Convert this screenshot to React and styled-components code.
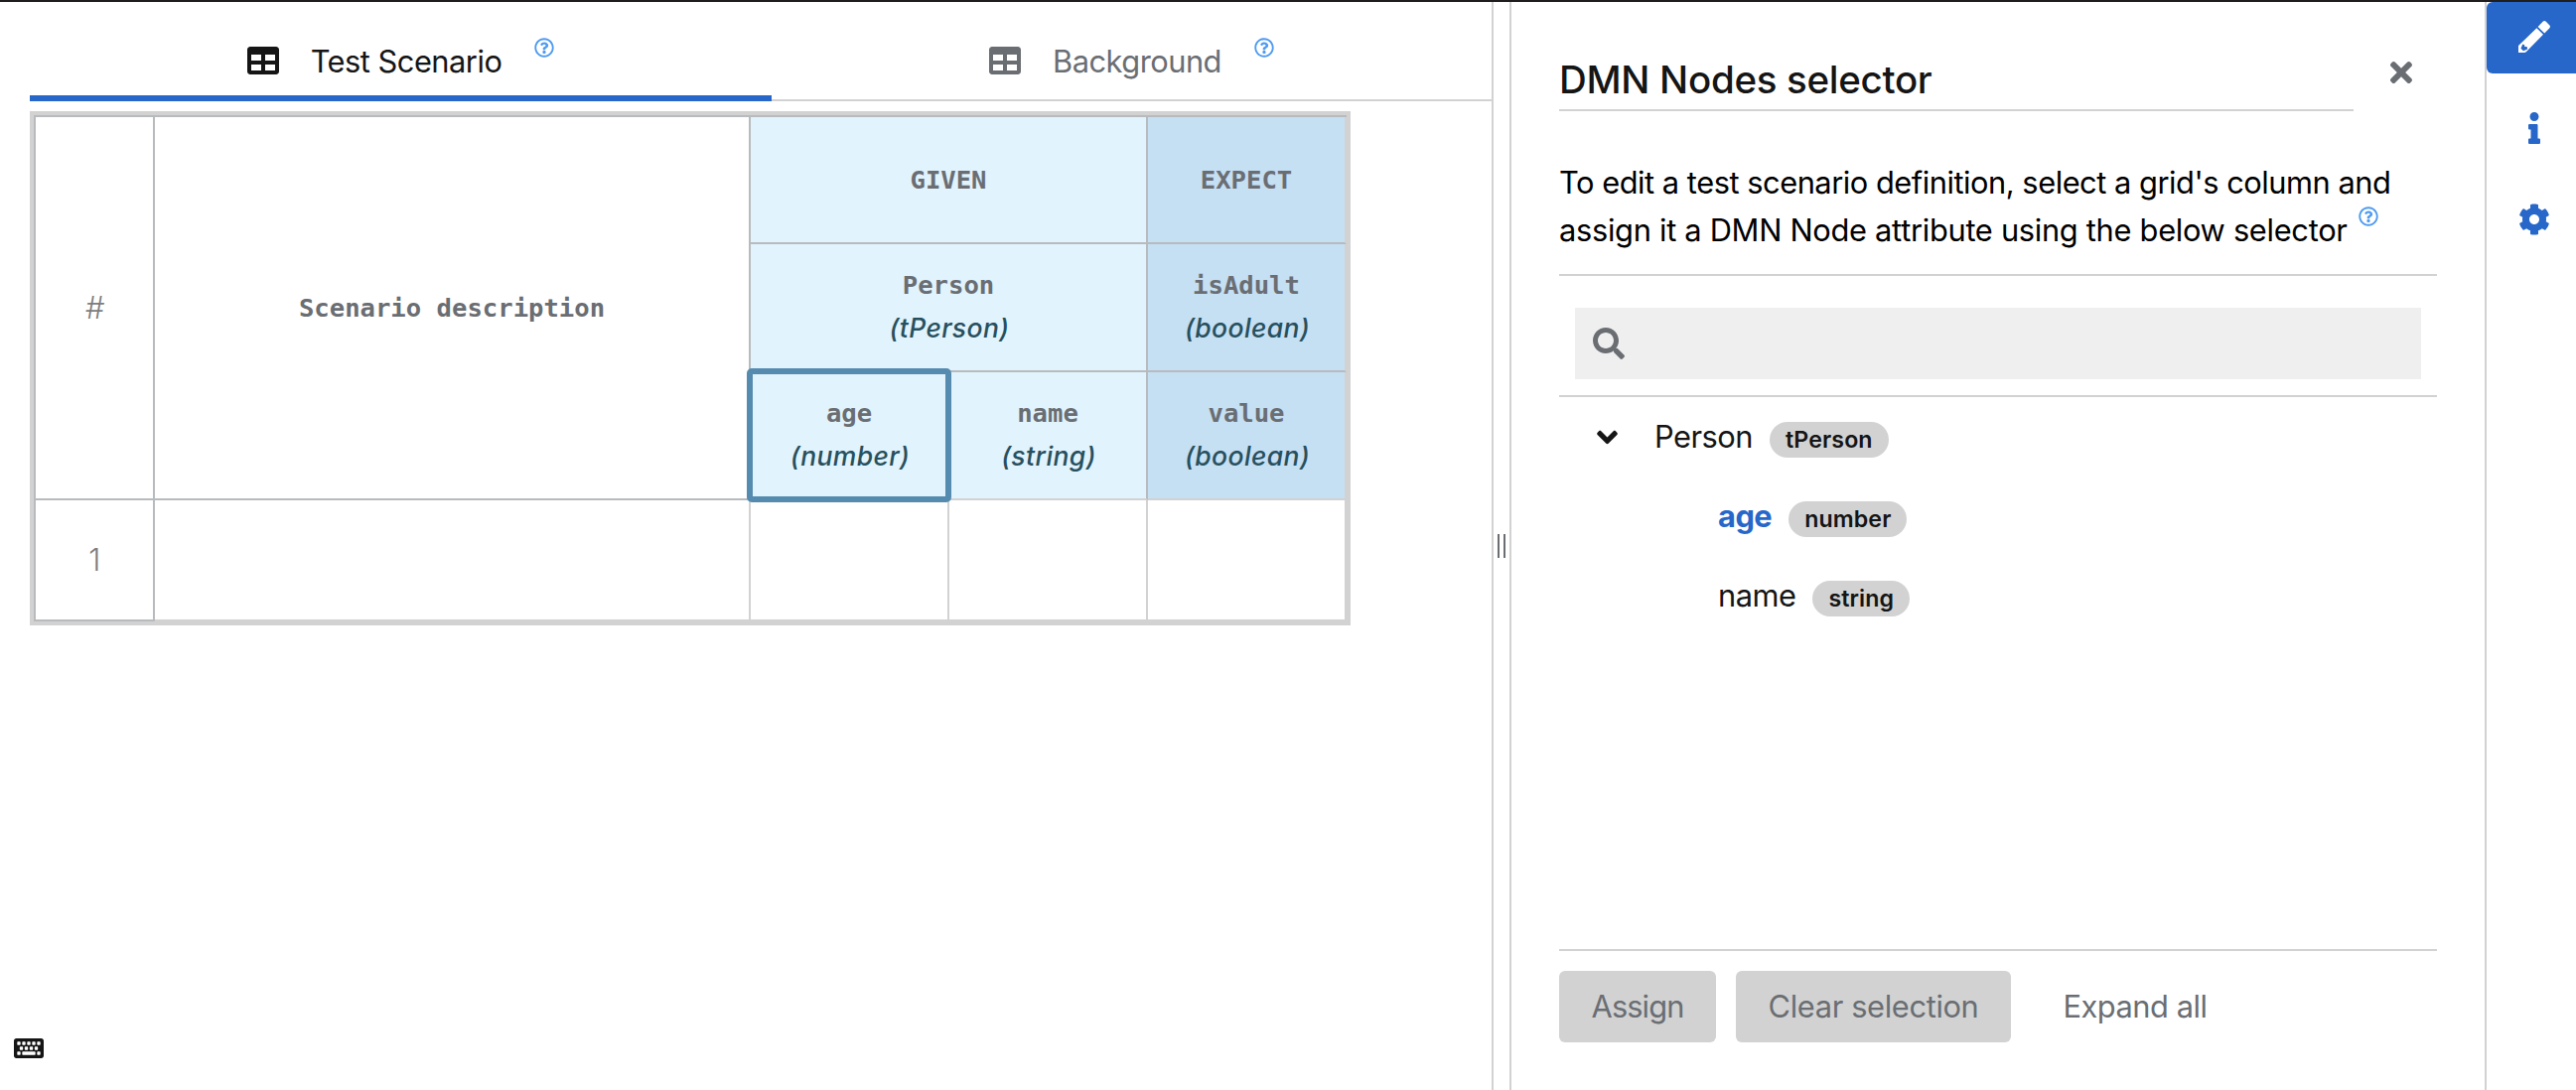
import React from "react";
import styled, { createGlobalStyle, css } from "styled-components";
import {
  FaAngleDown,
  FaCog,
  FaInfo,
  FaKeyboard,
  FaRegQuestionCircle,
  FaSearch,
  FaTable,
  FaTimes,
} from "react-icons/fa";

const color = {
  text: "#151515",
  muted: "#6a6e73",
  line: "#d2d2d2",
  gridLine: "#b8bbbe",
  blue: "#2767c9",
  help: "#4f9bf0",
  given: "#e1f3fd",
  expect: "#c5dff3",
  type: "#27505e",
  selected: "#568bb0",
};

const GlobalStyle = createGlobalStyle`
  * { box-sizing: border-box; }
  body { margin: 0; background: #fff; }
  button { border: 0; margin: 0; padding: 0; background: none; font: inherit; letter-spacing: inherit; color: inherit; }
  h2, p { margin: 0; }
  svg { display: block; flex: none; }
`;

const Page = styled.div`
  display: flex;
  height: 1098px;
  border-top: 2px solid #1f1d1e;
  background: #fff;
  color: ${color.text};
  font: 400 30.8px/48px Inter, "Liberation Sans", sans-serif;
  letter-spacing: -0.5px;
`;

/* ---------- editor ---------- */

const Editor = styled.main`
  display: flex;
  flex-direction: column;
  align-items: flex-start;
  width: 1502px;
  padding-left: 30px;
`;

const Tabs = styled.nav`
  display: flex;
  width: 100%;
  height: 100px;
  border-bottom: 2px solid ${color.line};
`;

const Tab = styled.button`
  position: relative;
  display: flex;
  align-items: center;
  justify-content: center;
  width: ${(p) => p.$width}px;
  padding-top: 20px;
  color: ${(p) => (p.$active ? color.text : color.muted)};

  ${(p) =>
    p.$active &&
    css`
      &::after {
        content: "";
        position: absolute;
        left: 0;
        right: 0;
        bottom: -2px;
        height: 6px;
        background: ${color.blue};
      }
    `}
`;

const TabLabel = styled.span`
  margin: 0 33px 0 32px;
  padding-top: 2px;
`;

const TabHelp = styled(FaRegQuestionCircle)`
  margin-bottom: 26px;
  color: ${color.help};
`;

const GridFrame = styled.div`
  margin-top: 10px;
  border: 4px solid ${color.line};
`;

const Grid = styled.div`
  display: grid;
  grid-template-columns: 120px 600px 200px 200px 200px;
  grid-template-rows: 128px 129px 129px 122px;
  border: solid ${color.gridLine};
  border-width: 2px 0 0 2px;
`;

const Cell = styled.div`
  position: relative;
  display: flex;
  flex-direction: column;
  align-items: center;
  justify-content: center;
  grid-column: ${(p) => p.$col};
  grid-row: ${(p) => p.$row};
  border-right: 2px solid ${(p) => (p.$softRight ? color.line : color.gridLine)};
  border-bottom: 2px solid ${(p) => (p.$softBottom ? color.line : color.gridLine)};
  background: ${(p) => p.$fill || "#fff"};
  padding-bottom: ${(p) => (p.$double ? 2 : 0)}px;
`;

const IndexCell = styled(Cell)`
  color: #7d7d7d;
  font-style: ${(p) => (p.$slanted ? "italic" : "normal")};
  font-weight: 350;
`;

const Name = styled.strong`
  font: 700 25.6px/43px "DejaVu Sans Mono", "Liberation Mono", monospace;
  letter-spacing: 0;
  color: ${color.muted};
`;

const Type = styled.em`
  padding-left: 2px;
  font-size: 26.5px;
  font-weight: 550;
  line-height: 43px;
  letter-spacing: 0.4px;
  color: ${color.type};
`;

const Selection = styled.i`
  position: absolute;
  z-index: 1;
  top: -4px;
  right: -4px;
  bottom: -4px;
  left: -4px;
  border: 6px solid ${color.selected};
  border-radius: 5px;
`;

const KeyboardButton = styled.button`
  margin: auto 0 30px -16px;
  height: 27px;
`;

/* ---------- splitter ---------- */

const Splitter = styled.div`
  display: flex;
  align-items: center;
  justify-content: center;
  gap: 4px;
  width: 20px;
  border: solid ${color.line};
  border-width: 0 2px;
`;

const Grip = styled.span`
  width: 2px;
  height: 24px;
  background: ${color.muted};
`;

/* ---------- panel ---------- */

const Panel = styled.aside`
  display: flex;
  flex-direction: column;
  width: 980px;
  padding: 54px 48px 48px;
`;

const PanelHeader = styled.header`
  display: flex;
  align-items: flex-start;
`;

const Title = styled.h2`
  width: 800px;
  padding-bottom: 6px;
  border-bottom: 2px solid ${color.line};
  font-size: 38.5px;
  font-weight: 540;
  line-height: 48px;
  letter-spacing: -0.3px;
`;

const Close = styled.button`
  margin: 1px 0 0 32px;
  color: ${color.muted};
`;

const Hint = styled.p`
  margin-top: 48px;
  padding-bottom: 20px;
  border-bottom: 2px solid ${color.line};
  color: #000;
`;

const HintLine = styled.span`
  display: block;
  white-space: nowrap;
  letter-spacing: ${(p) => p.$track}px;
`;

const HintHelp = styled(FaRegQuestionCircle)`
  display: inline-block;
  margin-left: 11px;
  vertical-align: 15px;
  color: ${color.help};
`;

const SearchArea = styled.div`
  padding: 32px 16px 16px;
  border-bottom: 2px solid ${color.line};
`;

const SearchBox = styled.div`
  display: flex;
  align-items: center;
  height: 72px;
  padding-left: 18px;
  background: #efefef;
  color: ${color.muted};
`;

const Tree = styled.div`
  flex: 1;
  padding-top: 3px;
`;

const Node = styled.div`
  display: flex;
  align-items: center;
  height: 80px;
  padding-left: ${(p) => (p.$level ? 160 : 32)}px;
`;

const Chevron = styled(FaAngleDown)`
  margin: 0 31px 6px 0;
`;

const NodeLabel = styled.span`
  margin: 0 17px 6px 0;
  font-weight: ${(p) => (p.$selected ? 650 : 400)};
  color: ${(p) => (p.$selected ? color.blue : color.text)};
`;

const Badge = styled.span`
  height: 36px;
  padding: 0 16px;
  border-radius: 18px;
  background: ${color.line};
  font-size: 23.2px;
  font-weight: 600;
  line-height: 36px;
  letter-spacing: 0.1px;
`;

const Actions = styled.footer`
  display: flex;
  gap: 20px;
  padding-top: 20px;
  border-top: 2px solid ${color.line};
`;

const Action = styled.button`
  width: ${(p) => p.$width}px;
  height: 72px;
  border-radius: 6px;
  background: ${(p) => (p.$link ? "none" : color.line)};
  color: ${color.muted};
  letter-spacing: ${(p) => p.$track}px;
`;

/* ---------- dock ---------- */

const Dock = styled.nav`
  display: flex;
  flex-direction: column;
  gap: 20px;
  width: 92px;
  border-left: 2px solid ${color.line};
`;

const DockButton = styled.button`
  display: flex;
  align-items: center;
  justify-content: center;
  height: 72px;
  padding: 0 0 2px 6px;
  border-radius: 6px 0 0 6px;
  background: ${(p) => (p.$active ? color.blue : "none")};
  color: ${(p) => (p.$active ? "#fff" : color.blue)};
`;

function PencilIcon() {
  return (
    <svg width="32" height="32" viewBox="0 0 32 32" fill="currentColor">
      <path d="M24.6.8q1.6-1.4 3.2 0l3.4 3.4q1.6 1.6 0 3.4l-4.9 5-6.7-6.7z" />
      <path
        fillRule="evenodd"
        d="M18.4 7.2l6.6 6.6L7.8 31.2l-1.4.8H0v-7zM4.3 23.6L2.4 27.8l2.6 2.5 4.2-1.8-.6-2.6H6.2v-1.6z"
      />
    </svg>
  );
}

function HeaderText({ name, type }) {
  return (
    <>
      <Name>{name}</Name>
      {type && <Type>({type})</Type>}
    </>
  );
}

const attributes = [
  { name: "age", type: "number", selected: true },
  { name: "name", type: "string" },
];

export default function App() {
  return (
    <>
      <GlobalStyle />
      <Page>
        <Editor>
          <Tabs>
            <Tab $width={747} $active>
              <FaTable size={32} />
              <TabLabel>Test Scenario</TabLabel>
              <TabHelp size={20} />
            </Tab>
            <Tab $width={725}>
              <FaTable size={32} />
              <TabLabel>Background</TabLabel>
              <TabHelp size={20} />
            </Tab>
          </Tabs>

          <GridFrame>
            <Grid>
              <IndexCell $col="1" $row="1 / 4" $slanted>#</IndexCell>
              <Cell $col="2" $row="1 / 4">
                <HeaderText name="Scenario description" />
              </Cell>
              <Cell $col="3 / 5" $row="1" $fill={color.given}>
                <HeaderText name="GIVEN" />
              </Cell>
              <Cell $col="5" $row="1" $fill={color.expect} $softRight>
                <HeaderText name="EXPECT" />
              </Cell>
              <Cell $col="3 / 5" $row="2" $fill={color.given} $double>
                <HeaderText name="Person" type="tPerson" />
              </Cell>
              <Cell $col="5" $row="2" $fill={color.expect} $softRight $double>
                <HeaderText name="isAdult" type="boolean" />
              </Cell>
              <Cell $col="3" $row="3" $fill={color.given} $double>
                <HeaderText name="age" type="number" />
                <Selection />
              </Cell>
              <Cell $col="4" $row="3" $fill={color.given} $softBottom $double>
                <HeaderText name="name" type="string" />
              </Cell>
              <Cell $col="5" $row="3" $fill={color.expect} $softBottom $softRight $double>
                <HeaderText name="value" type="boolean" />
              </Cell>
              <IndexCell $col="1" $row="4">1</IndexCell>
              {[2, 3, 4, 5].map((col) => (
                <Cell key={col} $col={col} $row="4" $softRight $softBottom />
              ))}
            </Grid>
          </GridFrame>

          <KeyboardButton aria-label="Keyboard shortcuts">
            <FaKeyboard size={30} />
          </KeyboardButton>
        </Editor>

        <Splitter>
          <Grip />
          <Grip />
        </Splitter>

        <Panel>
          <PanelHeader>
            <Title>DMN Nodes selector</Title>
            <Close aria-label="Close">
              <FaTimes size={32} />
            </Close>
          </PanelHeader>
          <Hint>
            <HintLine $track={-0.47}>
              To edit a test scenario definition, select a grid's column and
            </HintLine>
            <HintLine $track={-0.29}>
              assign it a DMN Node attribute using the below selector
              <HintHelp size={20} />
            </HintLine>
          </Hint>
          <SearchArea>
            <SearchBox>
              <FaSearch size={32} />
            </SearchBox>
          </SearchArea>
          <Tree>
            <Node>
              <Chevron size={33} />
              <NodeLabel>Person</NodeLabel>
              <Badge>tPerson</Badge>
            </Node>
            {attributes.map((a) => (
              <Node key={a.name} $level={1}>
                <NodeLabel $selected={a.selected}>{a.name}</NodeLabel>
                <Badge>{a.type}</Badge>
              </Node>
            ))}
          </Tree>
          <Actions>
            <Action $width={158} $track={-0.9}>Assign</Action>
            <Action $width={277} $track={-0.35}>Clear selection</Action>
            <Action $width={210} $track={-0.45} $link>Expand all</Action>
          </Actions>
        </Panel>

        <Dock>
          <DockButton $active aria-label="Edit">
            <PencilIcon />
          </DockButton>
          <DockButton aria-label="Info">
            <FaInfo size={32} />
          </DockButton>
          <DockButton aria-label="Settings">
            <FaCog size={32} />
          </DockButton>
        </Dock>
      </Page>
    </>
  );
}
